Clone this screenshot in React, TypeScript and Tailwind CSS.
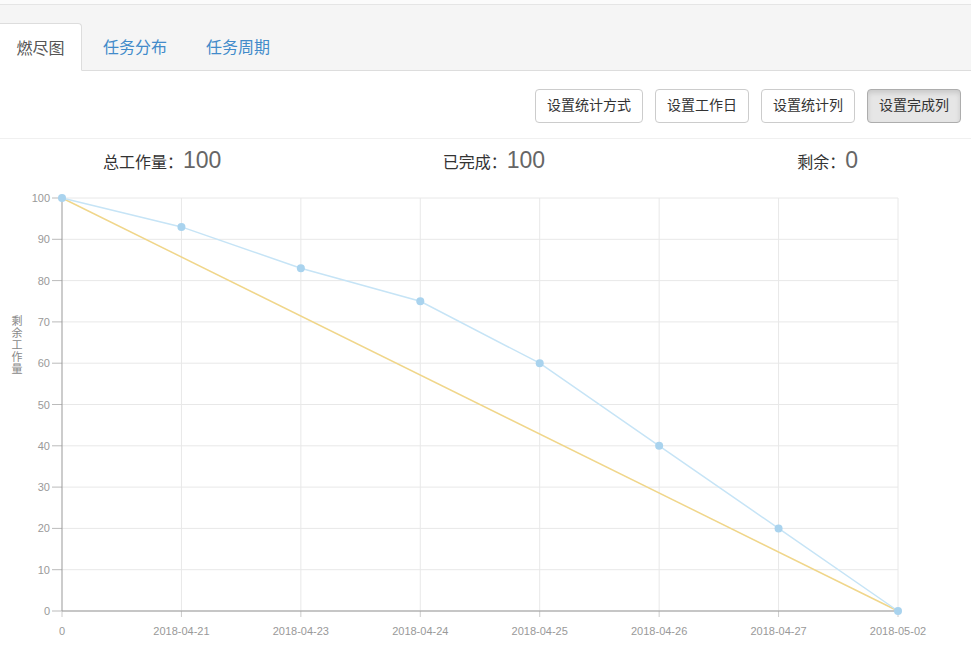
import React from "react"

const font = { fontFamily: '"Liberation Sans", "Noto Sans CJK SC", sans-serif' }

const actual = [100, 93, 83, 75, 60, 40, 20, 0]
const dates = ["0", "2018-04-21", "2018-04-23", "2018-04-24", "2018-04-25", "2018-04-26", "2018-04-27", "2018-05-02"]

const X0 = 62
const X1 = 898
const Y0 = 610
const Y1 = 197

const xAt = (i: number) => X0 + ((X1 - X0) / 7) * i
const yAt = (v: number) => Y0 - ((Y0 - Y1) * v) / 100

const Chart = () => {
    const yTicks = [0, 10, 20, 30, 40, 50, 60, 70, 80, 90, 100]
    const pts = actual.map((v, i) => `${xAt(i)},${yAt(v)}`).join(" ")
    return (
        <svg width={971} height={476} viewBox="0 180 971 476" className="block">
            {yTicks.map((t) => (
                <g key={t}>
                    <line x1={X0} x2={X1} y1={yAt(t)} y2={yAt(t)} stroke="#e8e8e8" strokeWidth={1} />
                    <line x1={52} x2={X0} y1={yAt(t)} y2={yAt(t)} stroke="#bbb" strokeWidth={1} />
                    <text x={50} y={yAt(t) + 4} textAnchor="end" fontSize={11} fill="#999">{t}</text>
                </g>
            ))}
            {dates.map((d, i) => (
                <g key={d}>
                    {i > 0 && <line x1={xAt(i)} x2={xAt(i)} y1={Y1} y2={Y0} stroke="#e8e8e8" strokeWidth={1} />}
                    <line x1={xAt(i)} x2={xAt(i)} y1={Y0} y2={Y0 + 6} stroke="#ccc" strokeWidth={1} />
                    <text x={xAt(i)} y={634} textAnchor="middle" fontSize={11} fill="#999">{d}</text>
                </g>
            ))}
            <line x1={X0} x2={X0} y1={Y1} y2={Y0} stroke="#999" strokeWidth={1} />
            <line x1={X0} x2={X1} y1={Y0} y2={Y0} stroke="#999" strokeWidth={1} />
            <text x={17} fontSize={11} fill="#888" textAnchor="middle">
                {"剩余工作量".split("").map((c, i) => (
                    <tspan key={i} x={17} y={324 + i * 12}>{c}</tspan>
                ))}
            </text>
            <line x1={X0} y1={Y1} x2={X1} y2={Y0} stroke="#f0d68a" strokeWidth={1.5} />
            <polyline points={pts} fill="none" stroke="#c6e4f6" strokeWidth={1.5} />
            {actual.map((v, i) => (
                <circle key={i} cx={xAt(i)} cy={yAt(v)} r={4} fill="#a9d3ee" />
            ))}
        </svg>
    )
}

const Btn = ({ label, active }: { label: string; active?: boolean }) => (
    <button
        className={
            active
                ? "h-[34px] px-[11px] text-[14px] text-[#333] rounded border border-[#adadad] bg-[#e6e6e6] shadow-[inset_0_3px_5px_rgba(0,0,0,0.125)]"
                : "h-[34px] px-[11px] text-[14px] text-[#333] rounded border border-[#ccc] bg-white"
        }
    >
        {label}
    </button>
)

export default function App() {
    return (
        <div className="w-[971px] h-[656px] bg-white overflow-hidden" style={font}>
            <div className="h-[5px] bg-[#fbfbfb] border-b border-[#e5e5e5]" />
            <div className="h-[66px] bg-[#f5f5f5] border-b border-[#ddd] flex items-end">
                <div className="h-[48px] w-[82px] -mb-px pt-[3px] bg-white border border-[#ddd] border-b-white border-l-0 rounded-tr flex items-center justify-center text-[16px] text-[#555]">
                    燃尽图
                </div>
                <div className="h-[48px] pt-[3px] flex items-center text-[16px] text-[#428bca]">
                    <span className="pl-[21px]">任务分布</span>
                    <span className="pl-[39px]">任务周期</span>
                </div>
            </div>
            <div className="h-[68px] pt-[2px] border-b border-[#f0f0f0] flex items-center justify-end gap-[12px] pr-[10px]">
                <Btn label="设置统计方式" />
                <Btn label="设置工作日" />
                <Btn label="设置统计列" />
                <Btn label="设置完成列" active />
            </div>
            <div className="h-[42px] grid grid-cols-3 items-center text-[16px] text-[#333]">
                <div className="pl-[103px]">总工作量：<span className="text-[23px] text-[#666]">100</span></div>
                <div className="pl-[119px]">已完成：<span className="text-[23px] text-[#666]">100</span></div>
                <div className="pl-[150px]">剩余：<span className="text-[23px] text-[#666]">0</span></div>
            </div>
            <Chart />
        </div>
    )
}
